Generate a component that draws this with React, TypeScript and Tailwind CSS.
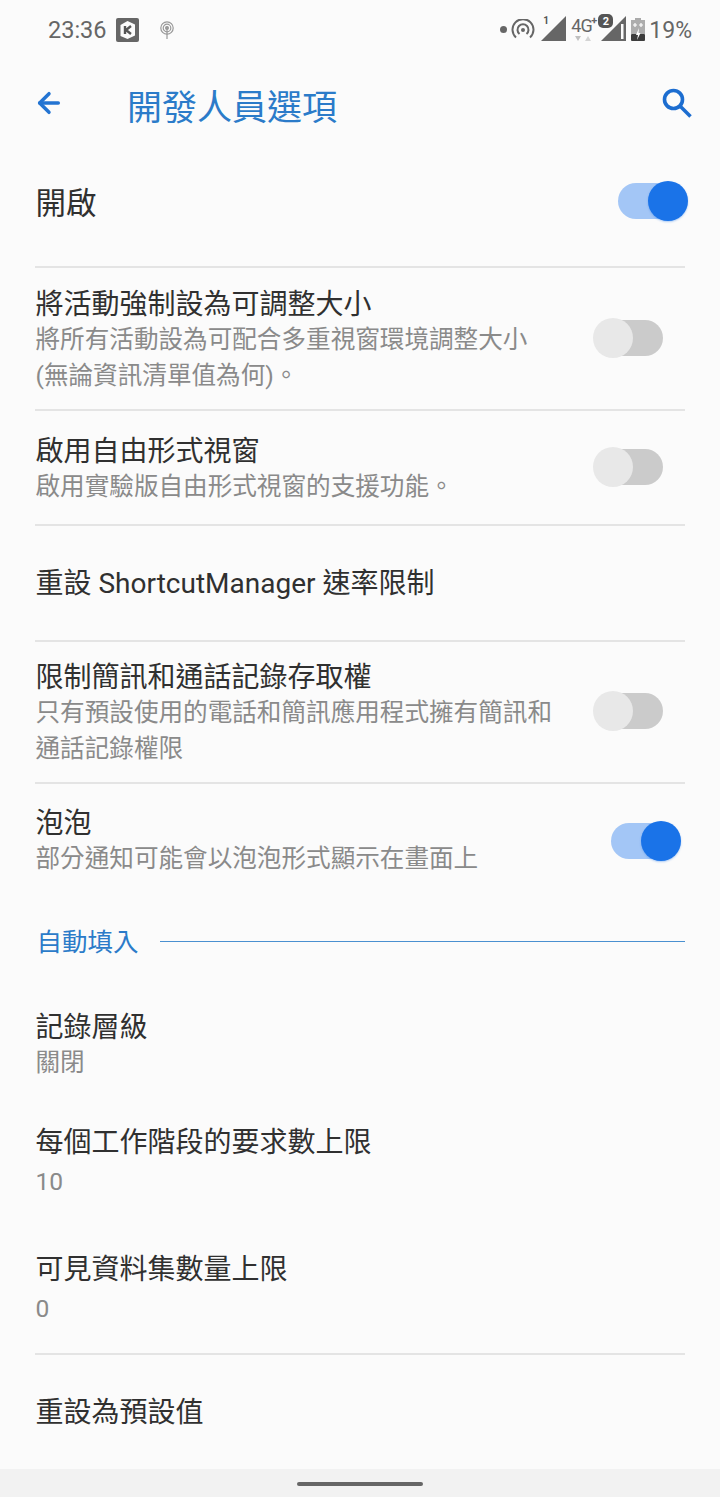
import { ArrowLeft } from 'lucide-react'

const FONT = 'font-["Roboto","Noto_Sans_CJK_TC",sans-serif]'

function Toggle({ on }: { on: boolean }) {
  if (on) {
    return (
      <div className="relative h-10 w-[70px] shrink-0">
        <div className="absolute left-0 top-[2px] h-9 w-[62px] rounded-full bg-[#a3c6f6]" />
        <div className="absolute right-0 top-0 h-10 w-10 rounded-full bg-[#1a73e8] shadow-[0_1px_2px_rgba(26,115,232,0.35)]" />
      </div>
    )
  }
  return (
    <div className="relative h-10 w-[70px] shrink-0">
      <div className="absolute right-0 top-[2px] h-9 w-[66px] rounded-full bg-[#cbcbcb]" />
      <div className="absolute left-0 top-0 h-10 w-10 rounded-full bg-[#e8e8e8]" />
    </div>
  )
}

function Divider() {
  return <div className="mx-[35px] h-[2px] shrink-0 bg-[#e4e4e4]" />
}

function Title({ children }: { children: string }) {
  return <div className="text-[28px] leading-[35px] text-[#303030]">{children}</div>
}

function Sub({ children, className = '' }: { children: string; className?: string }) {
  return <div className={`text-[24.6px] leading-[36.5px] text-[#8a8a8a] ${className}`}>{children}</div>
}

function StatusIcons() {
  return (
    <div className="flex items-start">
      <div className="mt-[26px] h-[7px] w-[7px] rounded-full bg-[#666]" />
      <svg width="24" height="20" viewBox="0 0 24 20" className="ml-[4px] mt-[19px]" fill="none" stroke="#666" strokeWidth="2">
        <path d="M5 18.5 A10.5 10.5 0 1 1 19 18.5" />
        <path d="M8.5 15 A5.5 5.5 0 1 1 15.5 15" />
        <circle cx="12" cy="11" r="2" fill="#666" stroke="none" />
      </svg>
      <div className="relative ml-[6px] mt-[16px] h-[26px] w-[26px]">
        <svg width="26" height="26" viewBox="0 0 26 26" className="absolute left-0 top-0">
          <path d="M0 25 L25 0 V25 Z" fill="#666" />
        </svg>
        <span className="absolute left-[2px] top-[-1px] text-[10px] font-bold leading-[12px] text-[#555]">1</span>
      </div>
      <div className="relative ml-[3px] mt-[14px] h-[28px] w-[31px]">
        <span className="absolute left-[1px] top-0 text-[18px] leading-[24px] tracking-[-1px] text-[#666]">4G</span>
        <span className="absolute left-[21px] top-0 text-[11px] font-bold leading-[14px] text-[#666]">+</span>
        <svg width="24" height="6" viewBox="0 0 24 6" className="absolute left-[5px] top-[22px]">
          <path d="M0 0 H6 L3 5 Z" fill="#c0c0c0" />
          <path d="M10 5 H16 L13 0 Z" fill="#d4d4d4" />
        </svg>
      </div>
      <div className="relative mt-[16px] h-[26px] w-[26px]">
        <svg width="26" height="26" viewBox="0 0 26 26" className="absolute left-0 top-0">
          <path d="M0 25 L25 0 V25 Z" fill="#666" />
          <rect x="20" y="8" width="2.5" height="15" fill="#fbfbfb" />
        </svg>
        <span className="absolute left-[-3px] top-[-2px] flex h-[14px] w-[15px] items-center justify-center rounded-[5px] bg-[#555] text-[11px] font-bold leading-none text-white">2</span>
      </div>
      <svg width="14" height="23" viewBox="0 0 14 23" className="ml-[4px] mt-[18px]">
        <rect x="4" y="0" width="6" height="2" fill="#aaa" />
        <rect x="0" y="2" width="14" height="14" fill="#adadad" />
        <rect x="0" y="16" width="14" height="7" rx="1" fill="#3c3c3c" />
        <path d="M2 7 h4 M4 5 v4 M8 7 h4 M10 5 v4" stroke="#fff" strokeWidth="1.2" />
        <path d="M8 10 L5 17 H7 L6 22 L9.5 15 H7.5 Z" fill="#fff" />
      </svg>
      <span className="ml-[4px] mt-[17px] text-[23px] leading-[27px] text-[#666]">19%</span>
    </div>
  )
}

export default function App() {
  return (
    <div className={`flex h-[1497px] w-[720px] flex-col overflow-hidden bg-[#fbfbfb] ${FONT}`}>
      <div className="flex h-[60px] shrink-0 justify-between pl-[48px] pr-[28px]">
        <div className="flex items-center">
          <span className="text-[23.5px] leading-[28px] text-[#666]">23:36</span>
          <svg width="23" height="24" viewBox="0 0 23 24" className="ml-[9px]">
            <rect width="23" height="24" rx="2" fill="#666" />
            <path d="M11.5 3 L19 6.5 V17.5 L11.5 21 L4.5 18 V7 Z" fill="#fbfbfb" />
            <path d="M9 8 V16 M15 8 L10 12 L15 16" stroke="#555" strokeWidth="2.4" fill="none" />
          </svg>
          <svg width="14" height="18" viewBox="0 0 14 18" className="ml-[21px]" fill="none" stroke="#999" strokeWidth="1.2">
            <circle cx="7" cy="7" r="6.2" />
            <circle cx="7" cy="7" r="3.8" />
            <circle cx="7" cy="7" r="1.4" fill="#999" />
            <path d="M7 8 V18" />
          </svg>
        </div>
        <StatusIcons />
      </div>

      <div className="flex h-[88px] shrink-0 items-center pl-[33px] pr-[27px]">
        <ArrowLeft size={32} strokeWidth={2.6} className="-mt-[2px] text-[#2374d2]" />
        <div className="ml-[62px] mt-[10px] flex-1 text-[35px] leading-[46px] text-[#2b7bc9]">開發人員選項</div>
        <svg width="32" height="32" viewBox="0 0 32 32" className="-mt-[2px]" fill="none" stroke="#1c6dd0" strokeWidth="3.6">
          <circle cx="12.5" cy="12.5" r="9" />
          <path d="M19 19 L29.5 29.5" />
        </svg>
      </div>

      <div className="flex h-[118px] shrink-0 items-center justify-between pb-[12px] pl-[35.5px] pr-[32px]">
        <div className="mt-[6px] text-[30.5px] leading-[40px] text-[#303030]">開啟</div>
        <Toggle on />
      </div>
      <Divider />

      <div className="flex h-[141px] shrink-0 items-center justify-between pb-[2px] pl-[35.5px] pr-[57px]">
        <div className="mt-[6px]">
          <Title>將活動強制設為可調整大小</Title>
          <Sub>將所有活動設為可配合多重視窗環境調整大小</Sub>
          <Sub>(無論資訊清單值為何)。</Sub>
        </div>
        <Toggle on={false} />
      </div>
      <Divider />

      <div className="flex h-[113px] shrink-0 items-center justify-between pb-[2px] pl-[35.5px] pr-[57px]">
        <div className="mt-[6px]">
          <Title>啟用自由形式視窗</Title>
          <Sub>啟用實驗版自由形式視窗的支援功能。</Sub>
        </div>
        <Toggle on={false} />
      </div>
      <Divider />

      <div className="flex h-[114px] shrink-0 items-center pl-[35.5px]">
        <Title>重設 ShortcutManager 速率限制</Title>
      </div>
      <Divider />

      <div className="flex h-[140px] shrink-0 items-center justify-between pb-[2px] pl-[35.5px] pr-[57px]">
        <div className="mt-[5px]">
          <Title>限制簡訊和通話記錄存取權</Title>
          <Sub>只有預設使用的電話和簡訊應用程式擁有簡訊和</Sub>
          <Sub>通話記錄權限</Sub>
        </div>
        <Toggle on={false} />
      </div>
      <Divider />

      <div className="flex h-[113px] shrink-0 items-center justify-between pl-[35.5px] pr-[39px]">
        <div className="mt-[3px]">
          <Title>泡泡</Title>
          <Sub>部分通知可能會以泡泡形式顯示在畫面上</Sub>
        </div>
        <Toggle on />
      </div>

      <div className="flex h-[93px] shrink-0 items-center pb-[4px] pl-[36.5px] pr-[35px]">
        <span className="text-[25.5px] leading-[36px] text-[#2b7bc9]">自動填入</span>
        <div className="ml-[21px] h-px flex-1 bg-[#4a90d0]" />
      </div>

      <div className="flex h-[108px] shrink-0 flex-col justify-center pl-[35.5px] pt-[3px]">
        <Title>記錄層級</Title>
        <Sub>關閉</Sub>
      </div>
      <div className="flex h-[127px] shrink-0 flex-col justify-center pl-[35.5px] pt-[2px]">
        <Title>每個工作階段的要求數上限</Title>
        <Sub className="mt-[4px]">10</Sub>
      </div>
      <div className="flex h-[128px] shrink-0 flex-col justify-center pl-[35.5px] pt-[2px]">
        <Title>可見資料集數量上限</Title>
        <Sub className="mt-[4px]">0</Sub>
      </div>
      <Divider />

      <div className="flex h-[114px] shrink-0 items-center pl-[35.5px]">
        <div className="mt-[1px]">
          <Title>重設為預設值</Title>
        </div>
      </div>

      <div className="flex flex-1 items-center justify-center bg-[#f2f2f2] pt-[2px]">
        <div className="h-[4px] w-[126px] rounded-full bg-[#666]" />
      </div>
    </div>
  )
}
